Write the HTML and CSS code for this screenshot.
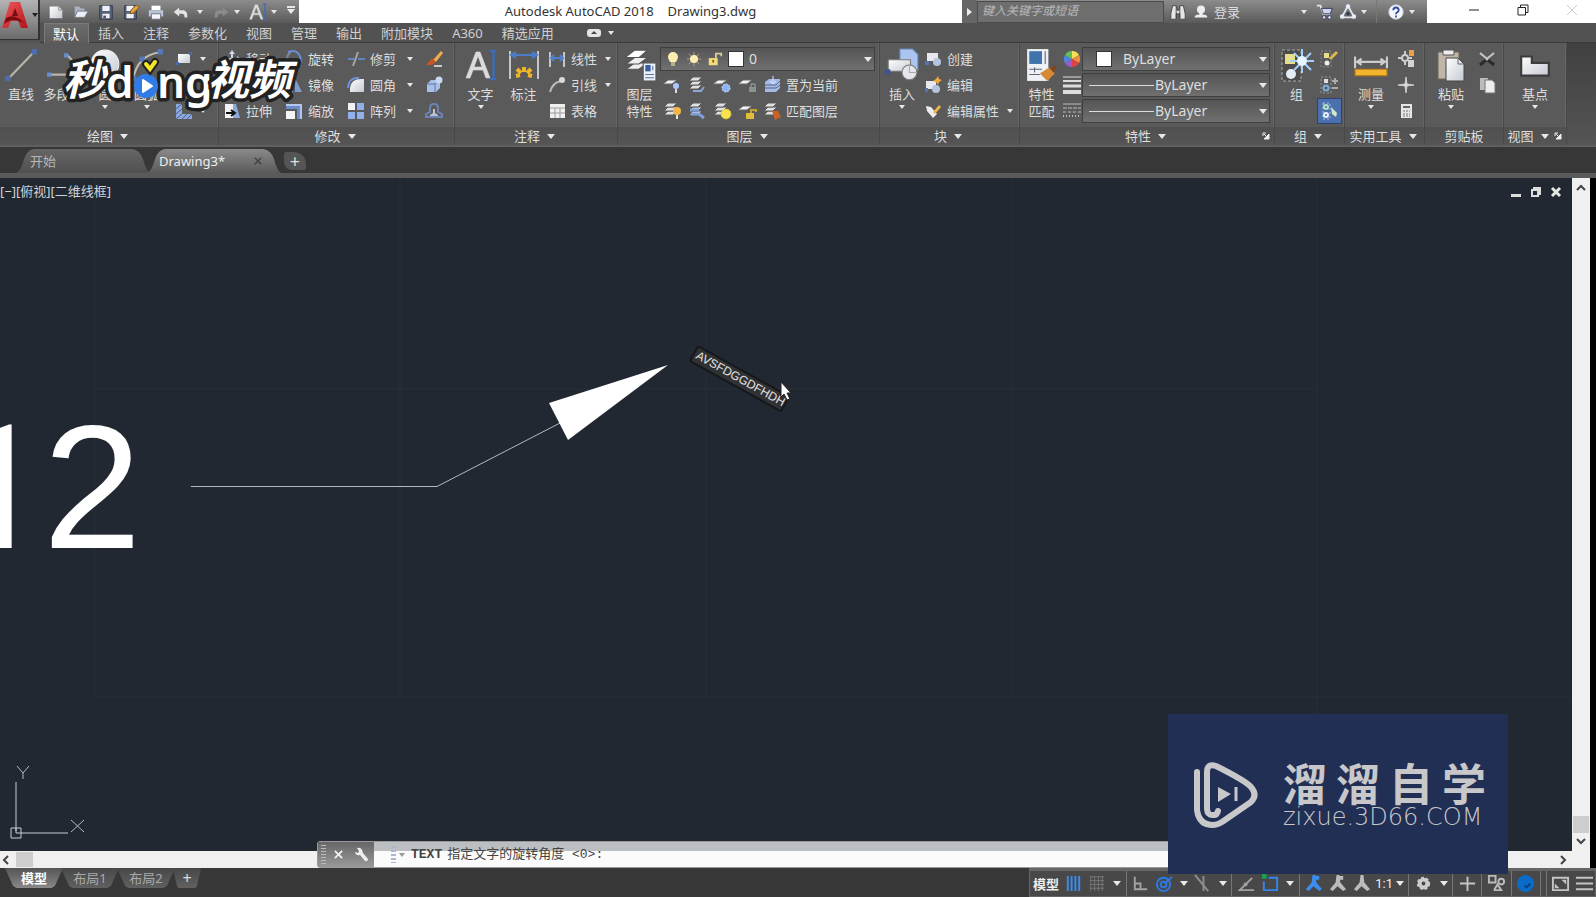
FILE: index.html
```html
<!DOCTYPE html>
<html lang="zh-CN">
<head>
<meta charset="utf-8">
<title>Autodesk AutoCAD 2018 - Drawing3.dwg</title>
<link rel="stylesheet" href="styles.css">
</head>
<body>
<svg class="sprite" aria-hidden="true">
  <defs>
    <linearGradient id="red" x2="1" y2="1"><stop stop-color="#f0585a"/><stop offset="1" stop-color="#b3141c"/></linearGradient>
    <linearGradient id="paper" x2="1" y2="1"><stop stop-color="#fff"/><stop offset="1" stop-color="#c4c9d2"/></linearGradient>
  </defs>
  <symbol id="new" viewBox="0 0 20 20"><path d="M3 4h10l4 4v9H3z" fill="url(#paper)"/><path d="M13 4v4h4" fill="none" stroke="#888"/></symbol>
  <symbol id="open" viewBox="0 0 20 20"><path d="M3 4h5l2 2h4v3H7l-4 7z" fill="#a9b2c2"/><path d="M6 9h12l-4 7H3z" fill="#eceff5" stroke="#6c7380"/></symbol>
  <symbol id="save" viewBox="0 0 20 20"><path d="M3 3h14v15H3z" fill="#56647b" stroke="#303743"/><path d="M6 3h8v6H6zM6 12h8v5H6z" fill="#eef1f7"/><path d="M7 14h3v3H7z" fill="#47536a"/></symbol>
  <symbol id="saveas" viewBox="0 0 20 20"><path d="M3 3h13v15H3z" fill="#56647b" stroke="#303743"/><path d="M5 3h8v6H5zM5 12h8v5H5z" fill="#eef1f7"/><path d="M9 12l1-4 6-6 3 3-6 6z" fill="#e8a13c" stroke="#77501a"/></symbol>
  <symbol id="print" viewBox="0 0 20 20"><path d="M5 3h10v5H5z" fill="#fff"/><path d="M2 8h16v7H2z" fill="#b9c3d5"/><path d="M5 12h10v6H5z" fill="#f4f6fb" stroke="#6a7180"/></symbol>
  <symbol id="undo" viewBox="0 0 20 20"><path d="M2 10l6-5v3h5q4 1 4 6v2h-3q0-4-3-4H8v3z" fill="#e4e4e4"/></symbol>
  <symbol id="redo" viewBox="0 0 20 20"><path d="M18 10l-6-5v3H7q-4 1-4 6v2h3q0-4 3-4h3v3z" fill="#8c8c8c"/></symbol>
  <symbol id="textA" viewBox="0 0 32 32"><path d="M1 29L11 3h4l10 26h-4l-3-8H8l-3 8zM9 18h8L13 7z" fill="#dcdcdc" stroke="#dcdcdc" stroke-width=".6"/><path d="M25 2h6M25 30h6M28.500 2v28" stroke="#3f6cb8" stroke-width="2.500" fill="none"/></symbol>
  <symbol id="bino" viewBox="0 0 20 20"><path d="M4 3h4l1 5h2l1-5h4l2 9v6h-6v-6H8v6H2v-6z" fill="#e6e6e6" stroke="#444"/><path d="M8 4v13M12 4v13" stroke="#444"/></symbol>
  <symbol id="user" viewBox="0 0 20 20"><circle cx="10" cy="7" r="5" fill="#eceef2"/><path d="M8 10h4v3q6 0 6 4H2q0-4 6-4z" fill="#eceef2"/></symbol>
  <symbol id="cart" viewBox="0 0 20 20"><path d="M1 3h4l3 9h8" fill="none" stroke="#dfe3f0" stroke-width="2"/><path d="M6 6h12l-2 6H8z" fill="#cdd5ea" stroke="#2e375c"/><circle cx="9" cy="16" r="2" fill="#dfe3f0" stroke="#2e375c"/><circle cx="15" cy="16" r="2" fill="#dfe3f0" stroke="#2e375c"/></symbol>
  <symbol id="tri" viewBox="0 0 20 20"><path d="M10 3l7 13H3z" fill="none" stroke="#dfe3f0" stroke-width="2"/><circle cx="10" cy="4" r="2.500" fill="#e8ecf8"/><circle cx="3.500" cy="15" r="2.500" fill="#e8ecf8"/><circle cx="16.500" cy="15" r="2.500" fill="#e8ecf8"/><circle cx="10" cy="12" r="2" fill="#2e375c"/></symbol>
  <symbol id="help" viewBox="0 0 20 20"><circle cx="10" cy="10" r="8" fill="#f4f6fb" stroke="#c6cbd8"/><path d="M7 8q0-3 3-3t3 3q0 1.500-2 2.500-1 .5-1 2M10 14v2" fill="none" stroke="#324a9e" stroke-width="2"/></symbol>
  <symbol id="line" viewBox="0 0 32 32"><path d="M4 29L28 4" stroke="#b9b5aa" stroke-width="2"/><path d="M1 26h5v5H1zM26 1h5v5h-5z" fill="#4c6cae"/></symbol>
  <symbol id="pline" viewBox="0 0 32 32"><path d="M3 25h20q8-9-3-18" fill="none" stroke="#b9b5aa" stroke-width="2"/><path d="M1 23h4v4H1zM17 5h4v4h-4z" fill="#6c8cd0"/></symbol>
  <symbol id="circle" viewBox="0 0 32 32"><circle cx="16" cy="15" r="13" fill="url(#paper)" stroke="#eee"/></symbol>
  <symbol id="arc" viewBox="0 0 32 32"><path d="M3 29Q7 7 28 4" fill="none" stroke="#c0bcb2" stroke-width="2"/><path d="M1 26h5v5H1zM26 1h5v5h-5zM9 8h5v5H9z" fill="#5878b8"/></symbol>
  <symbol id="rect" viewBox="0 0 20 20"><path d="M4 5h12v9H4z" fill="url(#paper)"/><path d="M2 13h3v3H2zM15 3h3v3h-3z" fill="#4a6cb4"/></symbol>
  <symbol id="ell" viewBox="0 0 20 20"><ellipse cx="10" cy="10" rx="8" ry="5" fill="none" stroke="#ccc" stroke-width="2"/></symbol>
  <symbol id="hatch" viewBox="0 0 20 20"><path d="M2 3h6v10h10v5H2z" fill="#8ca8dc"/><path d="M2 8l6-5M2 13l6-5M2 18l6-5M8 18l5-5M13 18l5-5" stroke="#46608e"/></symbol>
  <symbol id="move" viewBox="0 0 20 20"><path d="M10 1l3 4h-2v4h4V7l4 3-4 3v-2h-4v4h2l-3 4-3-4h2v-4H5v2l-4-3 4-3v2h4V5H7z" fill="#cdd6e8"/></symbol>
  <symbol id="copy" viewBox="0 0 20 20"><circle cx="7" cy="8" r="5" fill="#aabfe8"/><circle cx="13" cy="12" r="5" fill="#dde5f5"/></symbol>
  <symbol id="stretch" viewBox="0 0 20 20"><path d="M3 3h8v14H3z" fill="#f3f3f3"/><path d="M11 3h3l4 14h-7z" fill="#8caada"/><path d="M4 12h8M9 9l4 3-4 3" fill="none" stroke="#111" stroke-width="2"/></symbol>
  <symbol id="rotate" viewBox="0 0 20 20"><path d="M7 3a7 7 0 1 0 10 8" fill="none" stroke="#7d8594" stroke-width="2"/><path d="M4 3q12-4 13 10" fill="none" stroke="#6b8fd6" stroke-width="2"/></symbol>
  <symbol id="mirror" viewBox="0 0 20 20"><path d="M9 3v14H2z" fill="#ececec"/><path d="M11 3v14h7z" fill="#7d9cd0"/></symbol>
  <symbol id="scale" viewBox="0 0 20 20"><path d="M2 3h16v15h-5V8H2z" fill="#6d8cca"/><path d="M2 3h16v15h-2V5H2z" fill="#b4c6ee"/><path d="M2 10h9v8H2z" fill="#f4f4f8"/></symbol>
  <symbol id="trim" viewBox="0 0 20 20"><path d="M2 10h6M12 10h7" stroke="#5c86c4" stroke-width="2"/><path d="M12 3L7 17" stroke="#a6a6a6" stroke-width="2"/></symbol>
  <symbol id="fillet" viewBox="0 0 20 20"><path d="M4 17V13Q5 4 15 4h3v13z" fill="url(#paper)"/><path d="M2 13Q3 2 13 3" fill="none" stroke="#6c93dc" stroke-width="2"/></symbol>
  <symbol id="array" viewBox="0 0 20 20"><path d="M2 2h7v7H2z" fill="#f0f2f7"/><path d="M11 2h7v7h-7zM2 11h7v7H2zM11 11h7v7h-7z" fill="#8fb0ea"/></symbol>
  <symbol id="erase" viewBox="0 0 20 20"><path d="M9 11l8-9 2 2-7 9z" fill="#efad4e"/><path d="M2 16l6-7 4 4-4 3z" fill="#c65424"/><path d="M10 17h8" stroke="#c9c9c9" stroke-width="2"/></symbol>
  <symbol id="explode" viewBox="0 0 20 20"><path d="M3 9l4-4h9v8l-4 4H3z" fill="#a8bfe8"/><path d="M3 9h8v8M11 9l5-4" fill="none" stroke="#5a78ac"/><circle cx="15" cy="5" r="3.500" fill="#c8d8f4"/></symbol>
  <symbol id="offset" viewBox="0 0 20 20"><path d="M2 16h16v-3l-4-2V7q0-4-4-4T6 7v4l-4 2z" fill="none" stroke="#6a83b4" stroke-width="2"/><path d="M6 15v-1l3-2V8h2v4l3 2v1z" fill="#bcc4d4"/></symbol>
  <symbol id="dim" viewBox="0 0 32 32"><path d="M2 2v28M30 2v28" stroke="#c6c6c6" stroke-width="2"/><path d="M3 6h26M8 3L3 6l5 3M24 3l5 3-5 3" fill="#4c7bc8" stroke="#4c7bc8" stroke-width="2"/><path d="M16 18v5M9 20l4 4M23 20l-4 4M8 27l4-1M24 27l-4-1" stroke="#f0b429" stroke-width="4"/></symbol>
  <symbol id="linear" viewBox="0 0 20 20"><path d="M3 3v15M17 3v15" stroke="#c6c6c6" stroke-width="2"/><path d="M4 9h12M7 6L4 9l3 3M13 6l3 3-3 3" fill="#5080cc" stroke="#5080cc" stroke-width="2"/></symbol>
  <symbol id="leader" viewBox="0 0 20 20"><path d="M3 17Q5 8 14 6" fill="none" stroke="#bbb" stroke-width="2"/><circle cx="15" cy="5" r="3" fill="#d9d9d9"/></symbol>
  <symbol id="table" viewBox="0 0 20 20"><path d="M3 3h15v14H3z" fill="#f0f0f0"/><path d="M3 7h15M3 12h15M8 7v10M13 7v10" stroke="#9b9b9b"/></symbol>
  <symbol id="layers" viewBox="0 0 32 32"><g fill="#eee" stroke="#555"><path d="M3 20l8-6h12l-8 6z"/><path d="M3 15l8-6h12l-8 6z"/><path d="M2 9l9-7h12l-8 7z" fill="#fff"/></g><path d="M19 14h12v17H19z" fill="#e9eef8" stroke="#555"/><path d="M21 16h5v6h-5z" fill="#355f9e"/><path d="M21 25h8M21 28h8M28 17v4" stroke="#5b6f92"/></symbol>
  <symbol id="lay" viewBox="0 0 20 20"><path d="M1 9l5-4h9l-5 4z" fill="#f2f2f2" stroke="#666"/></symbol>
  <symbol id="lays" viewBox="0 0 20 20"><g fill="#e0e0e0" stroke="#5b5b5b"><path d="M2 14l4-4h9l-4 4z"/><path d="M2 10l4-4h9l-4 4z"/><path d="M2 6l4-4h9l-4 4z"/></g></symbol>
  <symbol id="l1" viewBox="0 0 20 20"><use href="#lay"/><circle cx="14" cy="11" r="3" fill="#a9c8ff"/><path d="M13 14h2v4h-2z" fill="#ddd"/></symbol>
  <symbol id="l2" viewBox="0 0 20 20"><use href="#lays"/><path d="M6 16h8l3-4" fill="none" stroke="#8ba9dc" stroke-width="2"/></symbol>
  <symbol id="l3" viewBox="0 0 20 20"><use href="#lay"/><circle cx="14" cy="13" r="4" fill="#8db4f4" stroke="#c5dafa" stroke-dasharray="2 1"/></symbol>
  <symbol id="l4" viewBox="0 0 20 20"><use href="#lay"/><path d="M12 12h7v5h-7z" fill="#86968c"/><path d="M14 12V9h4v3" fill="none" stroke="#9aa"/></symbol>
  <symbol id="l5" viewBox="0 0 20 20"><path d="M3 7l4-3h11v9l-4 4H3z" fill="#a5bbe4"/><path d="M3 10h11l4-4M3 13h11l4-3" fill="none" stroke="#50668e"/><path d="M11 1v8M8 6l3 3 3-3" stroke="#dbe7ff" fill="none"/></symbol>
  <symbol id="l6" viewBox="0 0 20 20"><use href="#lays"/><circle cx="15" cy="10" r="4" fill="#f4b648"/><path d="M14 14h2v4h-2z" fill="#e5e5e5"/></symbol>
  <symbol id="l7" viewBox="0 0 20 20"><use href="#lays"/><path d="M3 9h9M4 13h8l5 4" fill="none" stroke="#7d9edb" stroke-width="3"/></symbol>
  <symbol id="l8" viewBox="0 0 20 20"><use href="#lays"/><circle cx="14" cy="13" r="5" fill="#f6e34e" stroke="#d8c43c" stroke-dasharray="2 1"/></symbol>
  <symbol id="l9" viewBox="0 0 20 20"><use href="#lay"/><path d="M9 12h8v6H9z" fill="#e0bb3c"/><path d="M14 12V9h5v2" fill="none" stroke="#c9a22e" stroke-width="2"/></symbol>
  <symbol id="l10" viewBox="0 0 20 20"><use href="#lays"/><path d="M10 10h6l3 6-6 3z" fill="#c96226"/></symbol>
  <symbol id="bulb" viewBox="0 0 16 18"><path d="M8 2a5 5 0 0 0-5 5q0 2 2 5h6q2-3 2-5a5 5 0 0 0-5-5z" fill="#fbeeb0"/><path d="M6 12h4v4H6z" fill="#b9b08c"/></symbol>
  <symbol id="sun" viewBox="0 0 18 18"><path d="M9 1v16M1 9h16M3 3l12 12M15 3L3 15" stroke="#b3a98b"/><circle cx="9" cy="9" r="4.500" fill="#fdf0b4"/></symbol>
  <symbol id="lock" viewBox="0 0 18 18"><path d="M2 8h10v8H2z" fill="#f4dc7c"/><path d="M10 8V3h6v3" fill="none" stroke="#d6ca96" stroke-width="2"/><path d="M7 10v3" stroke="#77601c" stroke-width="2"/></symbol>
  <symbol id="insert" viewBox="0 0 32 32"><path d="M14 1h12l5 5v15H14z" fill="#a9c5f0" stroke="#6a85b4"/><path d="M3 11h21v11H3z" fill="url(#paper)" stroke="#777"/><circle cx="23" cy="23" r="7" fill="#e4e6ec" stroke="#777"/><path d="M23 17v6h7" fill="none" stroke="#aaa"/><path d="M0 20h5v5H0z" fill="#38559c"/></symbol>
  <symbol id="create" viewBox="0 0 20 20"><path d="M4 4h11v8H4z" fill="#e6e8ee"/><circle cx="14" cy="13" r="4" fill="#b5c3e0"/><path d="M2 12h4v4H2z" fill="#5672b4"/></symbol>
  <symbol id="edit" viewBox="0 0 20 20"><path d="M3 6h10v8H3z" fill="#e6e8ee"/><circle cx="13" cy="14" r="4" fill="#b5c3e0"/><path d="M2 13h3v4H2z" fill="#5672b4"/><path d="M15 1l1 3 3 1-3 2-1 3-2-3-3-1 3-2z" fill="#f2a73a"/></symbol>
  <symbol id="attr" viewBox="0 0 20 20"><path d="M3 5l5 1 6 7-4 4-6-7z" fill="#ececec"/><path d="M10 11l6-7 2 2-6 7z" fill="#f0b647"/></symbol>
  <symbol id="props" viewBox="0 0 32 32"><path d="M2 1h20v30H2z" fill="#eef0f5"/><path d="M4 3h12v12H4z" fill="#3f73ad"/><path d="M19 3v12M4 20h12M4 25h10M9 18v5" stroke="#5b6478"/><path d="M14 24l9-6 5 6-7 7z" fill="#d58a35"/><path d="M23 19l6-3 1 2-3 5z" fill="#7c4723"/></symbol>
  <symbol id="wheel" viewBox="0 0 20 20"><path d="M10 10V2a8 8 0 0 1 7 4z" fill="#f6e05a"/><path d="M10 10l7-4a8 8 0 0 1 0 8z" fill="#f18e3c"/><path d="M10 10l7 4a8 8 0 0 1-7 4z" fill="#dc4343"/><path d="M10 10v8a8 8 0 0 1-7-4z" fill="#9c5ac8"/><path d="M10 10l-7 4a8 8 0 0 1 0-8z" fill="#4c87dc"/><path d="M10 10L3 6a8 8 0 0 1 7-4z" fill="#68bc58"/></symbol>
  <symbol id="lw" viewBox="0 0 20 20"><path d="M1 2h18" stroke="#ddd"/><path d="M1 6h18" stroke="#ddd" stroke-width="2"/><path d="M1 11h18" stroke="#ddd" stroke-width="3"/><path d="M1 17h18" stroke="#ddd" stroke-width="4"/></symbol>
  <symbol id="lt" viewBox="0 0 20 20"><path d="M1 3h18" stroke="#bbb"/><path d="M1 7h18" stroke="#bbb" stroke-dasharray="4 1"/><path d="M1 11h18" stroke="#bbb" stroke-dasharray="3 2"/><path d="M1 15h18" stroke="#bbb" stroke-dasharray="1 2" stroke-width="2"/></symbol>
  <symbol id="group" viewBox="0 0 34 34"><path d="M2 2h19v31H2z" fill="#4c4c4c" stroke="#a9a9a9" stroke-dasharray="3 2"/><path d="M5 6h10v10H5z" fill="#e6df8a"/><circle cx="11" cy="26" r="5" fill="#e3ecf5"/><path d="M22 1v24M10 13h24M14 5l17 17M31 5L14 22" stroke="#a3d0fa" stroke-width="2"/><circle cx="22" cy="13" r="5" fill="#e8f6ff"/></symbol>
  <symbol id="g1" viewBox="0 0 20 20"><path d="M2 2h10v16H2z" fill="none" stroke="#888" stroke-dasharray="2 2"/><path d="M5 4h5v5H5z" fill="#e4df90"/><circle cx="8" cy="14" r="2.500" fill="#eee"/><path d="M11 10l7-7" stroke="#dcb750" stroke-width="3"/></symbol>
  <symbol id="g2" viewBox="0 0 20 20"><path d="M2 2h10v16H2z" fill="none" stroke="#999" stroke-dasharray="2 2"/><path d="M5 4h4v4H5z" fill="#ddd"/><circle cx="7" cy="13" r="2.500" fill="none" stroke="#7dade4" stroke-width="2"/><path d="M13 6h6M16 3v6M13 13h6" stroke="#aaa" stroke-width="2"/></symbol>
  <symbol id="g3" viewBox="0 0 20 20"><path d="M3 2h7v16H3z" fill="none" stroke="#a8c4f0" stroke-dasharray="2 2"/><circle cx="6" cy="6" r="2" fill="none" stroke="#b9e0c2" stroke-width="2"/><circle cx="6" cy="14" r="2" fill="none" stroke="#e5f2ff" stroke-width="2"/><path d="M11 6l6 6-1 4-4-3z" fill="#d2ecc4"/></symbol>
  <symbol id="measure" viewBox="0 0 32 32"><path d="M1 8v11M31 8v11" stroke="#ccc" stroke-width="2"/><path d="M2 13h28M7 10l-4 3 4 3M25 10l4 3-4 3" fill="#ccc" stroke="#ccc" stroke-width="2"/><path d="M1 20h30v6H1z" fill="#f3b530" stroke="#bb7f18"/></symbol>
  <symbol id="quick" viewBox="0 0 20 20"><circle cx="9" cy="9" r="3" fill="none" stroke="#ccc" stroke-width="2"/><path d="M2 9h5M11 9h5M9 2v5M9 11v5" stroke="#ccc" stroke-width="2"/><path d="M13 1h5v6h-5z" fill="#eda044"/><path d="M12 11h6v7h-6z" fill="#d4d4d4"/></symbol>
  <symbol id="point" viewBox="0 0 20 20"><path d="M10 2l1 7 7 1-7 1-1 7-1-7-7-1 7-1z" fill="#dedede" stroke="#ccc"/></symbol>
  <symbol id="calc" viewBox="0 0 20 20"><path d="M5 3h11v14H5z" fill="#e6e6e6"/><path d="M7 6h7" stroke="#666" stroke-width="2"/><path d="M7 10h7M7 13h7M7 15h7" stroke="#777" stroke-dasharray="2 1"/></symbol>
  <symbol id="paste" viewBox="0 0 32 34"><path d="M3 4h21v27H3z" fill="#bfb6a8" stroke="#6e655a"/><path d="M8 2h11v5H8z" fill="#eee" stroke="#555"/><path d="M11 10h12l6 6v17H11z" fill="url(#paper)" stroke="#444"/><path d="M23 10v6h6" fill="none" stroke="#666"/></symbol>
  <symbol id="cut" viewBox="0 0 20 20"><path d="M3 4l11 9M17 4L6 13" stroke="#c8c8c8" stroke-width="2"/><path d="M9 11l-6 5M11 11l6 5" stroke="#2b2b2b" stroke-width="3"/></symbol>
  <symbol id="copy2" viewBox="0 0 20 20"><path d="M3 3h8v12H3z" fill="#bcbcbc"/><path d="M8 5h7l3 3v10H8z" fill="#ededed" stroke="#777"/></symbol>
  <symbol id="base" viewBox="0 0 32 32"><path d="M3 8h10v6h16v12H3z" fill="url(#paper)" stroke="#3c3c3c" stroke-width="2"/></symbol>
  <symbol id="launch" viewBox="0 0 8 8"><path d="M1 1h3M1 1v3M2 2l4 4M7 2v5H2z" fill="#eee" stroke="#eee"/></symbol>
  <symbol id="wrench" viewBox="0 0 16 16"><path d="M2 5l3 1 1-2-2-3q5-1 6 5l5 6q0 3-3 2L7 8Q3 9 2 5z" fill="#eee"/></symbol>
  <symbol id="s-grid" viewBox="0 0 20 20"><path d="M4 2v16M8 2v16M12 2v16M16 2v16" stroke="#3b8df2" stroke-width="2"/></symbol>
  <symbol id="s-dots" viewBox="0 0 20 20"><path d="M3 3h15M3 7h15M3 11h15M3 15h15M4 2v16M8 2v16M12 2v16M16 2v16" stroke="#777"/></symbol>
  <symbol id="s-ortho" viewBox="0 0 20 20"><path d="M4 3v13h13M4 10h6v6" fill="none" stroke="#a2a2a2" stroke-width="2"/></symbol>
  <symbol id="s-polar" viewBox="0 0 20 20"><circle cx="9" cy="11" r="7" fill="none" stroke="#2c7be5" stroke-width="2"/><circle cx="9" cy="11" r="3" fill="none" stroke="#2c7be5" stroke-width="2"/><path d="M10 10l8-7" stroke="#2c7be5" stroke-width="2"/></symbol>
  <symbol id="s-iso" viewBox="0 0 20 20"><path d="M2 1l14 17M11 2v16" stroke="#8e8e8e" stroke-width="2"/></symbol>
  <symbol id="s-track" viewBox="0 0 20 20"><path d="M16 4L3 17h15" fill="none" stroke="#a2a2a2" stroke-width="2"/><circle cx="9" cy="11" r="2" fill="#a2a2a2"/></symbol>
  <symbol id="s-snap" viewBox="0 0 20 20"><path d="M8 4h9v13H3V8" fill="none" stroke="#3485ee" stroke-width="2"/><path d="M1 0h5v5H1z" fill="#19a04c"/></symbol>
  <symbol id="s-man" viewBox="0 0 20 20"><path d="M9 1h3l1 8 6 7-3 2-6-5-5 5-3-2 6-7z" stroke-width="1"/></symbol>
  <symbol id="s-man2" viewBox="0 0 20 20"><use href="#s-man"/><path d="M11 2h5v4h-4z"/></symbol>
  <symbol id="s-gear" viewBox="0 0 20 20"><circle cx="10" cy="10" r="4" fill="none" stroke="#ccc" stroke-width="4"/><circle cx="10" cy="10" r="6" fill="none" stroke="#ccc" stroke-width="2" stroke-dasharray="3 2"/></symbol>
  <symbol id="s-plus" viewBox="0 0 20 20"><path d="M10 3v15M2 10h16" stroke="#c4c4c4" stroke-width="2"/></symbol>
  <symbol id="s-iso2" viewBox="0 0 20 20"><path d="M2 2h7v7H2zM8 16l3-5 4 6H8z" fill="none" stroke="#bbb" stroke-width="2"/><circle cx="15" cy="8" r="3" fill="none" stroke="#bbb" stroke-width="2"/></symbol>
  <symbol id="s-perf" viewBox="0 0 20 20"><circle cx="10" cy="10" r="9" fill="#0a6cc8"/><path d="M9 12l2 2 4-4" fill="none" stroke="#0a3e7c" stroke-width="2"/></symbol>
  <symbol id="s-full" viewBox="0 0 20 20"><path d="M2 4h16v13H2z" fill="none" stroke="#c4c4c4" stroke-width="2"/><path d="M11 6h5v5zM4 10v5h5z" fill="#c4c4c4"/></symbol>
  <symbol id="s-menu" viewBox="0 0 20 20"><path d="M1 4h18M1 10h18M1 16h18" stroke="#c4c4c4" stroke-width="2"/></symbol>
</svg>

<div class="app">
  <header class="top">
    <button class="appbtn" aria-label="应用程序"><svg class="logoA" viewBox="0 0 26 28"><path d="M0 27L8 1h10l8 26h-7l-3-7H9l-3 7z" fill="url(#red)"/><path d="M13 7l-3 8h6zM4 17q9-5 18 5l-3-1q-8-5-17 2z" fill="#7a0d13"/></svg><i class="caret dark"></i></button>
    <div class="topright">
      <div class="titlebar">
        <div class="qat">
          <button aria-label="新建"><svg><use href="#new"/></svg></button><button aria-label="打开"><svg><use href="#open"/></svg></button><button aria-label="保存"><svg><use href="#save"/></svg></button><button aria-label="另存为"><svg><use href="#saveas"/></svg></button><button aria-label="打印"><svg><use href="#print"/></svg></button><button aria-label="放弃"><svg><use href="#undo"/></svg></button><i class="caret"></i><button aria-label="重做"><svg><use href="#redo"/></svg></button><i class="caret"></i><button aria-label="文字"><svg><use href="#textA"/></svg></button><i class="caret"></i><i class="caret bar"></i>
        </div>
        <h1 class="title"><span>Autodesk AutoCAD 2018</span><span>Drawing3.dwg</span></h1>
        <div class="info">
          <button class="expand" aria-label="展开"><i class="right"></i></button>
          <input class="search" type="text" placeholder="键入关键字或短语" aria-label="搜索">
          <button aria-label="查找"><svg><use href="#bino"/></svg></button>
          <button class="login"><svg><use href="#user"/></svg>登录</button><i class="caret"></i>
          <button aria-label="商店"><svg><use href="#cart"/></svg></button><button aria-label="连接"><svg><use href="#tri"/></svg></button><i class="caret"></i><i class="vsep"></i><button aria-label="帮助"><svg><use href="#help"/></svg></button><i class="caret"></i>
        </div>
        <div class="win">
          <button aria-label="最小化"><svg viewBox="0 0 12 12"><path d="M1 6h10" stroke="#222"/></svg></button>
          <button aria-label="还原"><svg viewBox="0 0 12 12"><path d="M1 3.500h7.500V11H1zM3.500 3V1H11v7.500H9" fill="none" stroke="#222"/></svg></button>
          <button aria-label="关闭"><svg viewBox="0 0 12 12"><path d="M1 1l10 10M11 1L1 11" stroke="#ccc"/></svg></button>
        </div>
      </div>
      <nav class="menu">
        <button class="on">默认</button><button>插入</button><button>注释</button><button>参数化</button><button>视图</button><button>管理</button><button>输出</button><button>附加模块</button><button>A360</button><button>精选应用</button>
        <span class="pill"><i class="up"></i></span><i class="caret"></i>
      </nav>
    </div>
  </header>

  <section class="ribbon">
    <div class="panel p-draw"><div class="body">
      <button class="big"><svg><use href="#line"/></svg>直线</button><button class="big"><svg><use href="#pline"/></svg>多段线</button><button class="big"><svg><use href="#circle"/></svg>圆<i class="caret"></i></button><button class="big"><svg><use href="#arc"/></svg>圆弧<i class="caret"></i></button>
      <div class="col"><button class="tool"><svg><use href="#rect"/></svg><i class="caret"></i></button><button class="tool"><svg><use href="#ell"/></svg><i class="caret"></i></button><button class="tool"><svg><use href="#hatch"/></svg><i class="caret"></i></button></div>
    </div><h2>绘图<i class="caret lg"></i></h2></div>

    <div class="panel p-modify"><div class="body">
      <div class="col w62"><button class="tool"><svg><use href="#move"/></svg>移动</button><button class="tool"><svg><use href="#copy"/></svg>复制</button><button class="tool"><svg><use href="#stretch"/></svg>拉伸</button></div>
      <div class="col w62"><button class="tool"><svg><use href="#rotate"/></svg>旋转</button><button class="tool"><svg><use href="#mirror"/></svg>镜像</button><button class="tool"><svg><use href="#scale"/></svg>缩放</button></div>
      <div class="col w78"><button class="tool"><svg><use href="#trim"/></svg>修剪<i class="caret"></i></button><button class="tool"><svg><use href="#fillet"/></svg>圆角<i class="caret"></i></button><button class="tool"><svg><use href="#array"/></svg>阵列<i class="caret"></i></button></div>
      <div class="col"><button class="tool"><svg><use href="#erase"/></svg></button><button class="tool"><svg><use href="#explode"/></svg></button><button class="tool"><svg><use href="#offset"/></svg></button></div>
    </div><h2>修改<i class="caret lg"></i></h2></div>

    <div class="panel p-annot"><div class="body">
      <button class="big"><svg><use href="#textA"/></svg>文字<i class="caret"></i></button><button class="big"><svg><use href="#dim"/></svg>标注</button>
      <div class="col"><button class="tool"><svg><use href="#linear"/></svg>线性<i class="caret"></i></button><button class="tool"><svg><use href="#leader"/></svg>引线<i class="caret"></i></button><button class="tool"><svg><use href="#table"/></svg>表格</button></div>
    </div><h2>注释<i class="caret lg"></i></h2></div>

    <div class="panel p-layer"><div class="body">
      <button class="big"><svg><use href="#layers"/></svg>图层<br>特性</button>
      <div class="col grow">
        <div class="combo layer"><svg><use href="#bulb"/></svg><svg><use href="#sun"/></svg><svg><use href="#lock"/></svg><i class="swatch"></i><select aria-label="图层"><option>0</option></select><i class="caret lg"></i></div>
        <div class="row"><button><svg><use href="#l1"/></svg></button><button><svg><use href="#l2"/></svg></button><button><svg><use href="#l3"/></svg></button><button><svg><use href="#l4"/></svg></button><button class="tool"><svg><use href="#l5"/></svg>置为当前</button></div>
        <div class="row"><button><svg><use href="#l6"/></svg></button><button><svg><use href="#l7"/></svg></button><button><svg><use href="#l8"/></svg></button><button><svg><use href="#l9"/></svg></button><button class="tool"><svg><use href="#l10"/></svg>匹配图层</button></div>
      </div>
    </div><h2>图层<i class="caret lg"></i></h2></div>

    <div class="panel p-block"><div class="body">
      <button class="big"><svg><use href="#insert"/></svg>插入<i class="caret"></i></button>
      <div class="col"><button class="tool"><svg><use href="#create"/></svg>创建</button><button class="tool"><svg><use href="#edit"/></svg>编辑</button><button class="tool"><svg><use href="#attr"/></svg>编辑属性<i class="caret"></i></button></div>
    </div><h2>块<i class="caret lg"></i></h2></div>

    <div class="panel p-props"><div class="body">
      <button class="big"><svg><use href="#props"/></svg>特性<br>匹配</button>
      <div class="col"><button class="tool"><svg><use href="#wheel"/></svg></button><button class="tool"><svg><use href="#lw"/></svg></button><button class="tool"><svg><use href="#lt"/></svg></button></div>
      <div class="col grow">
        <div class="combo color"><i class="swatch"></i><select aria-label="颜色"><option>ByLayer</option></select><i class="caret lg"></i></div>
        <div class="combo"><i class="rule"></i><select aria-label="线宽"><option>ByLayer</option></select><i class="caret lg"></i></div>
        <div class="combo"><i class="rule"></i><select aria-label="线型"><option>ByLayer</option></select><i class="caret lg"></i></div>
      </div>
    </div><h2>特性<i class="caret lg"></i><svg class="launch"><use href="#launch"/></svg></h2></div>

    <div class="panel p-group"><div class="body">
      <button class="big"><svg><use href="#group"/></svg>组</button>
      <div class="col"><button class="tool"><svg><use href="#g1"/></svg></button><button class="tool"><svg><use href="#g2"/></svg></button><button class="tool sel"><svg><use href="#g3"/></svg></button></div>
    </div><h2>组<i class="caret lg"></i></h2></div>

    <div class="panel p-util"><div class="body">
      <button class="big"><svg><use href="#measure"/></svg>测量<i class="caret"></i></button>
      <div class="col"><button class="tool"><svg><use href="#quick"/></svg></button><button class="tool"><svg><use href="#point"/></svg></button><button class="tool"><svg><use href="#calc"/></svg></button></div>
    </div><h2>实用工具<i class="caret lg"></i></h2></div>

    <div class="panel p-clip"><div class="body">
      <button class="big"><svg><use href="#paste"/></svg>粘贴<i class="caret"></i></button>
      <div class="col"><button class="tool"><svg><use href="#cut"/></svg></button><button class="tool"><svg><use href="#copy2"/></svg></button></div>
    </div><h2>剪贴板</h2></div>

    <div class="panel p-view"><div class="body">
      <button class="big"><svg><use href="#base"/></svg>基点<i class="caret"></i></button>
    </div><h2>视图<i class="caret lg"></i><svg class="launch"><use href="#launch"/></svg></h2></div>
    <div class="rest"></div>

    <svg class="brand" viewBox="0 0 250 64" role="img" aria-label="秒dong视频">
      <g class="brandtext"><text x="7" y="43" class="cjk">秒</text><text x="50" y="46" class="lat">d</text><text x="101" y="46" class="lat">ng</text><text x="151" y="43" class="cjk">视频</text></g>
      <circle cx="90" cy="34" r="12" fill="#2f7ce8"/><path d="M87 28l9 6-9 6z" fill="#fff" stroke="#fff" stroke-width="2" stroke-linejoin="round"/><path d="M90 12l4 5 5-7" fill="none" stroke="#222" stroke-width="8" stroke-linecap="round"/><path d="M90 12l4 5 5-7" fill="none" stroke="#f5e629" stroke-width="4" stroke-linecap="round"/>
    </svg>
  </section>

  <div class="doctabs">
    <button class="doc">开始</button><button class="doc on">Drawing3*<svg viewBox="0 0 10 10"><path d="M1 1l8 8M9 1L1 9" stroke="#444" stroke-width="2"/></svg></button><button class="add">+</button>
  </div>

  <main class="work">
    <div class="view">
      <div class="canvas">
        <svg class="drawing">
          <path d="M95 0v519M400 0v519M706 0v519M1012 0v519M1317 0v673M95 211h1222M95 519h1477" fill="none" stroke="#272f38"/>
          <text x="-50" y="370" class="one">1</text><text x="43" y="370" class="num">2</text>
          <path d="M191 308.500H437L560 245" fill="none" stroke="#b4b9c0"/>
          <path d="M549 225l119-38-100 75z" fill="#fff"/>
          <path d="M16 604v49M21 655h47" stroke="#c8ccd0"/><path d="M11 650h10v10H11zM16 655h5M16 650v5" fill="none" stroke="#c8ccd0"/>
          <path d="M17 588l6 7 6-7M23 595v6M71 642l13 12M84 642l-13 12" fill="none" stroke="#b4b9be"/>
          <g transform="translate(695 180) rotate(29)"><rect x="-3" y="-12" width="104" height="17" rx="2" fill="#303132" stroke="#15181c" stroke-width="2"/><text class="tip" x="0" y="0">AVSFDGGDFHDH</text></g>
          <path d="M781 204v15l3-3 3 6 3-1-3-6h4z" fill="#fff" stroke="#222"/>
        </svg>
        <span class="vplabel">[−][俯视][二维线框]</span>
        <div class="vpbtns"><svg viewBox="0 0 12 12"><path d="M1 8h10v3H1z" fill="#ddd"/></svg><svg viewBox="0 0 12 12"><path d="M2 4h6v6H2zM4 4V2h6v6H8" fill="none" stroke="#ddd" stroke-width="2"/></svg><svg viewBox="0 0 12 12"><path d="M2 2l8 8M10 2l-8 8" stroke="#e6e6e6" stroke-width="3"/></svg></div>
      </div>
      <div class="vscroll"><svg viewBox="0 0 10 10"><path d="M1 7l4-4 4 4" /></svg><i></i><svg viewBox="0 0 10 10"><path d="M1 3l4 4 4-4"/></svg></div>
    </div>
    <div class="hscroll"><svg viewBox="0 0 10 10"><path d="M7 1L3 5l4 4"/></svg><i></i><svg class="end" viewBox="0 0 10 10"><path d="M3 1l4 4-4 4"/></svg></div>
    <div class="cmd">
      <div class="handle"><i class="grip"></i><svg viewBox="0 0 12 12"><path d="M2 2l8 8M10 2l-8 8" stroke="#eee" stroke-width="2"/></svg><svg class="wr"><use href="#wrench"/></svg></div>
      <div class="prompt"><i class="ibeam"></i><i class="caret gray"></i><b>TEXT</b><span>指定文字的旋转角度 &lt;0&gt;:</span></div>
    </div>
  </main>

  <footer class="foot">
    <div class="layouts"><button class="on">模型</button><button>布局1</button><button>布局2</button><button class="plus">+</button></div>
    <div class="status">
      <button class="model">模型</button>
      <svg><use href="#s-grid"/></svg><svg><use href="#s-dots"/></svg><i class="caret lg"></i><i class="vsep"></i>
      <svg><use href="#s-ortho"/></svg><svg><use href="#s-polar"/></svg><i class="caret lg"></i><svg><use href="#s-iso"/></svg><i class="caret lg"></i><i class="vsep"></i>
      <svg><use href="#s-track"/></svg><svg><use href="#s-snap"/></svg><i class="caret lg"></i><i class="vsep"></i>
      <svg class="man act"><use href="#s-man2"/></svg><svg class="man"><use href="#s-man2"/></svg><svg class="man"><use href="#s-man"/></svg><button class="ratio">1:1</button><i class="caret lg near"></i><i class="vsep"></i>
      <svg><use href="#s-gear"/></svg><i class="caret lg"></i><i class="vsep"></i>
      <svg><use href="#s-plus"/></svg><i class="vsep"></i><svg><use href="#s-iso2"/></svg><i class="vsep"></i><svg><use href="#s-perf"/></svg><i class="vsep"></i><i class="vsep"></i>
      <svg><use href="#s-full"/></svg><svg><use href="#s-menu"/></svg>
    </div>
  </footer>

  <aside class="mark">
    <svg viewBox="0 0 68 70"><g fill="none" stroke="#c8c8ca" stroke-width="6" stroke-linecap="round" stroke-linejoin="round"><path d="M5 12v38q2 15 16 15 4 0 9-3l29-20q7-7 0-15Q54 21 24 6q-9-3-9 6v36q0 8 7 7 3 0 4-4"/></g><path d="M26 27l13 7-13 8z" fill="#c8c8ca"/><path d="M44 27v14" stroke="#c8c8ca" stroke-width="3"/></svg>
    <div class="marktext"><div class="cn"><span>溜</span><span>溜</span><span>自</span><span>学</span></div><div class="url">zixue.3D66.COM</div></div>
  </aside>
</div>
</body>
</html>
```
FILE: styles.css
```css
* { box-sizing: border-box; }
body { margin: 0; background: #373737; font: 13px/18px "Noto Sans", "Noto Sans CJK SC", sans-serif; color: #dedede; overflow: hidden; }
button, input, select { font: inherit; color: inherit; border: 0; padding: 0; margin: 0; background: none; }
h1, h2 { margin: 0; font-weight: 400; }
svg { display: block; flex: none; }
.sprite { position: absolute; width: 0; height: 0; }
.app { position: relative; display: flex; flex-direction: column; height: 100vh; }

.caret { display: block; flex: none; width: 0; height: 0; border: 3px solid transparent; border-top: 4px solid #e8e8e8; border-bottom: 0; }
.caret.lg { border-width: 4px; border-top-width: 5px; border-bottom: 0; }
.caret.dark { border-top-color: #222; }
.caret.gray { border-top-color: #999; }
.vsep { flex: none; width: 1px; align-self: stretch; background: #777; }

.top { display: flex; height: 43px; background: linear-gradient(#8a8a8a, #505050 23px, #545454); }
.appbtn { display: flex; align-items: center; gap: 4px; width: 40px; height: 40px; padding: 0 2px 10px; background: linear-gradient(#b4b4b4, #6b6b6b); border-right: 2px solid #333; border-bottom: 1px solid #333; }
.logoA { width: 26px; height: 28px; }
.topright { flex: 1; min-width: 0; }
.titlebar { display: flex; height: 23px; }
.qat { display: flex; align-items: center; width: 259px; padding-left: 7px; background: linear-gradient(#8c8c8c, #5a5a5a); }
.qat svg, .info svg { width: 18px; height: 18px; }
.qat button { margin-right: 7px; }
.qat .caret { margin: 0 6px 0 0; }
.qat .caret + button { margin-right: 4px; margin-left: 3px; }
.qat .bar { border-width: 4px; border-top-width: 5px; border-bottom: 0; margin-left: 4px; position: relative; }
.bar::before { content: ""; position: absolute; left: -4px; top: -8px; width: 8px; height: 2px; background: #e8e8e8; }
.title { display: flex; flex: 1; justify-content: center; gap: 14px; background: #fff; color: #333; font: 13px/22px "Noto Sans", sans-serif; white-space: nowrap; }
.info { display: flex; align-items: center; width: 465px; background: linear-gradient(#8c8c8c, #5a5a5a); }
.expand { width: 15px; height: 23px; background: #666; }
.right { display: block; margin-left: 5px; width: 0; border: 4px solid transparent; border-left: 5px solid #eee; border-right: 0; }
.search { width: 187px; height: 22px; padding: 0 4px 3px; background: #6e6e6e; border: 1px solid #4c4c4c; font-style: italic; }
.search::placeholder { color: #bbb; opacity: 1; font-size: 12px; }
.info > button:not(.expand) { margin-left: 5px; }
.info .login { display: flex; gap: 5px; align-items: center; margin-right: 57px; padding-left: 1px; }
.info .caret { margin: 0 4px; }
.info > .vsep { margin: 0 5px; }
.info .login svg { width: 16px; height: 16px; }
.win { display: flex; justify-content: space-around; flex: 0 0 169px; padding: 0 0 3px 22px; background: #fff; }
.win svg { width: 12px; height: 12px; }
.menu { display: flex; align-items: stretch; height: 20px; padding-left: 4px; border-bottom: 1px solid #3b3b3b; background: #525252; color: #d0d0d0; }
.menu button { height: 20px; padding: 0 10px 0 9px; }
.menu .on { background: linear-gradient(#6c6c6c, #5c5c5c); color: #fff; border: 1px solid #7a7a7a; border-bottom: 0; padding: 0 9px 0 8px; }
.pill { width: 14px; height: 8px; margin: 6px 7px 0 23px; border-radius: 3px; background: #e4e4e4; }
.up { display: block; width: 0; margin: 2px auto; border: 3px solid transparent; border-bottom: 3px solid #444; border-top: 0; }
.menu > .caret { align-self: center; }

.ribbon { position: relative; display: flex; height: 104px; background: #5a5a5a; border-bottom: 2px solid #5f5f5f; }
.panel { display: flex; flex-direction: column; flex: none; border-right: 1px solid #484848; box-shadow: inset -1px 0 #656565; }
.body { display: flex; flex: 1; padding: 3px 1px 0; }
.panel h2 { position: relative; display: flex; align-items: center; justify-content: center; gap: 7px; height: 18px; font-size: 13px; line-height: 18px; background: linear-gradient(#505050, #555); }
.panel h2:has(.caret) { padding-right: 3px; }
.launch { position: absolute; right: 4px; top: 5px; width: 8px; height: 8px; }
.rest { flex: 1; background: linear-gradient(#404040, #555); }
.p-draw { flex-basis: 219px; }
.p-modify { flex-basis: 236px; }
.p-annot { flex-basis: 163px; }
.p-layer { flex-basis: 262px; }
.p-block { flex-basis: 140px; }
.p-props { flex-basis: 255px; }
.p-group { flex-basis: 70px; }
.p-util { flex-basis: 80px; }
.p-clip { flex-basis: 79px; }
.p-view { flex-basis: 63px; }
.panel.p-view h2 { padding-right: 14px; }
.big { display: flex; flex-direction: column; align-items: center; width: 42px; flex: none; line-height: 17px; white-space: nowrap; }
.big svg { width: 34px; height: 34px; margin: 2px 0 4px; }
.big .caret { margin-top: 2px; }
.p-draw .body { padding-left: 0; }
.p-annot .body { padding-left: 4px; }
.p-annot .big { width: 43px; }
.p-annot .big svg { width: 32px; }
.p-layer .big, .p-props .big, .p-group .big { width: 41px; }
.p-util .big { width: 50px; }
.p-clip .big { width: 50px; }
.p-view .big { width: 60px; }
.p-modify .body { padding-left: 3px; }
.col { display: flex; flex-direction: column; }
.grow { flex: 1; padding-right: 3px; }
.w62 { width: 62px; }
.w78 { width: 78px; }
.tool { display: flex; align-items: center; gap: 4px; height: 26px; flex: none; white-space: nowrap; }
.tool svg, .row svg { width: 20px; height: 20px; }
.tool .caret { margin-left: 4px; }
.w78 .caret { margin-left: 7px; }
.p-draw .tool .caret { margin-left: 2px; }
.p-draw .col { margin-left: 6px; }
.p-annot .col { margin-left: 2px; }
.row { display: flex; gap: 5px; height: 26px; align-items: center; padding-left: 2px; }
.sel { width: 25px; padding-left: 2px; margin-left: -2px; background: #4c6fae; border: 1px solid #2c4370; }
.p-group .col { padding-left: 2px; }
.p-clip .col { margin-left: 1px; }
.combo { position: relative; display: flex; align-items: center; height: 24px; margin: 1px 0; border: 1px solid #3f3f3f; background: linear-gradient(#555, #707070); }
.combo select { appearance: none; flex: 1; min-width: 0; height: 22px; font-size: 14px; }
.combo .caret { position: absolute; right: 2px; top: 9px; pointer-events: none; }
.swatch { flex: none; width: 16px; height: 16px; background: #fff; border: 1px solid #333; }
.layer { gap: 5px; padding-left: 4px; }
.layer svg { width: 16px; height: 18px; }
.color { gap: 11px; padding-left: 13px; }
.rule { flex: none; width: 65px; height: 1px; margin: 0 1px 0 6px; background: #ddd; }
.brand { position: absolute; left: 56px; top: 9px; width: 250px; height: 64px; overflow: visible; }
.brandtext { fill: #fff; stroke: #222; stroke-width: 7px; stroke-linejoin: round; paint-order: stroke; }
.cjk { font: italic 700 42px "Noto Sans CJK SC", sans-serif; }
.lat { font: 600 44px "Noto Sans", sans-serif; }

.doctabs { display: flex; align-items: flex-end; flex: none; height: 31px; padding: 0 0 0 16px; background: #373737; border-bottom: 5px solid #5a5a5a; }
.doc { display: flex; align-items: center; justify-content: space-between; width: 134px; height: 24px; padding: 0 19px 0 14px; color: #b8b8b8; background: linear-gradient(#666, #505050); clip-path: path("M0 24Q5 22 8 10Q11 1 18 0H116Q124 1 127 10Q130 22 134 24Z"); }
.doc.on { margin-left: -3px; padding-left: 12px; color: #eee; background: linear-gradient(#8a8a8a, #5a5a5a); }
.doc svg { width: 8px; height: 8px; }
.add { width: 22px; height: 18px; margin: 0 0 3px 3px; background: #555; border-radius: 2px 12px 2px 8px; font-size: 18px; line-height: 16px; }

.work { position: relative; display: flex; flex-direction: column; flex: 1; min-height: 0; padding-right: 6px; background: #000; }
.view { display: flex; flex: 1; min-height: 0; }
.canvas { position: relative; flex: 1; background: #212831; overflow: hidden; }
.drawing { position: absolute; inset: 0; width: 100%; height: 100%; }
.num { font: 177px "Liberation Sans", sans-serif; fill: #fff; }
.one { font: 173px Roboto, sans-serif; fill: #fff; }
.tip { font: 12px "Liberation Sans", sans-serif; fill: #e2e2e2; }
.vplabel { position: absolute; left: 0; top: 4px; color: #d0d4d8; }
.vpbtns { position: absolute; right: 10px; top: 8px; display: flex; gap: 8px; }
.vpbtns svg { width: 12px; height: 12px; }
.vscroll { display: flex; flex-direction: column; align-items: center; width: 18px; padding: 5px 0; background: #f0f0f0; }
.vscroll svg, .hscroll svg { width: 10px; height: 10px; fill: none; stroke: #444; stroke-width: 2px; }
.vscroll i { width: 16px; height: 17px; margin: auto 0 3px; background: #cdcdcd; }
.hscroll { display: flex; align-items: center; flex: none; height: 17px; padding-left: 1px; background: #f0f0f0; }
.hscroll i { width: 17px; height: 15px; margin-left: 5px; background: #cdcdcd; }
.hscroll .end { margin: 0 22px 0 auto; }
.cmd { position: absolute; left: 317px; right: 90px; bottom: 0; height: 27px; display: flex; border: 1px solid #999; border-radius: 3px 0 0 3px; background: rgba(255, 255, 255, .7); }
.handle { display: flex; align-items: center; gap: 11px; width: 56px; padding-left: 3px; background: linear-gradient(#666, #999); }
.handle svg { width: 11px; height: 11px; }
.grip { width: 5px; height: 19px; margin-right: -4px; background: repeating-linear-gradient(#bbb 0 1px, transparent 1px 3px); }
.handle .wr { width: 16px; height: 16px; margin-left: -2px; }
.prompt { display: flex; align-items: center; padding-left: 17px; color: #444; font: 13px/20px "Liberation Mono", "Noto Sans CJK SC", monospace; }
.prompt b { margin: 0 5px 0 6px; }
.ibeam { width: 5px; height: 17px; margin-right: 3px; background: repeating-linear-gradient(#a9b8d0 0 2px, transparent 2px 4px); }

.foot { display: flex; justify-content: space-between; flex: none; height: 29px; background: #373737; }
.layouts { display: flex; padding-left: 5px; }
.layouts button { width: 58px; height: 20px; margin-right: -2px; color: #aaa; background: linear-gradient(#484848, #606060); clip-path: polygon(0 0, 100% 0, 86% 90%, 80% 100%, 20% 100%, 14% 90%); }
.layouts .on { background: linear-gradient(#555, #888); color: #fff; font-weight: 700; }
.layouts .plus { width: 28px; font-size: 16px; line-height: 18px; color: #ddd; }
.status { display: flex; align-items: center; justify-content: space-between; width: 567px; padding: 0 1px 0 3px; border: 1px solid #666; border-top-width: 3px; background: #484848; }
.status svg { width: 19px; height: 19px; }
.status .man { fill: #bbb; }
.status .act { fill: #3b8df2; }
.status svg + .caret { margin-left: 2px; }
.status .near { margin-left: -2px; }
.model { color: #eee; font-weight: 700; }
.ratio { color: #eee; font-family: Roboto, sans-serif; }

.mark { position: absolute; right: 88px; bottom: 23px; display: flex; gap: 23px; width: 340px; height: 160px; padding: 46px 0 0 24px; background: #222f55; color: #c8c8ca; }
.mark svg { width: 68px; height: 70px; }
.cn { display: flex; gap: 9px; font: 700 44px/44px "Noto Sans CJK SC", sans-serif; }
.url { font: 200 24px/26px "DejaVu Sans", sans-serif; white-space: nowrap; }
```
